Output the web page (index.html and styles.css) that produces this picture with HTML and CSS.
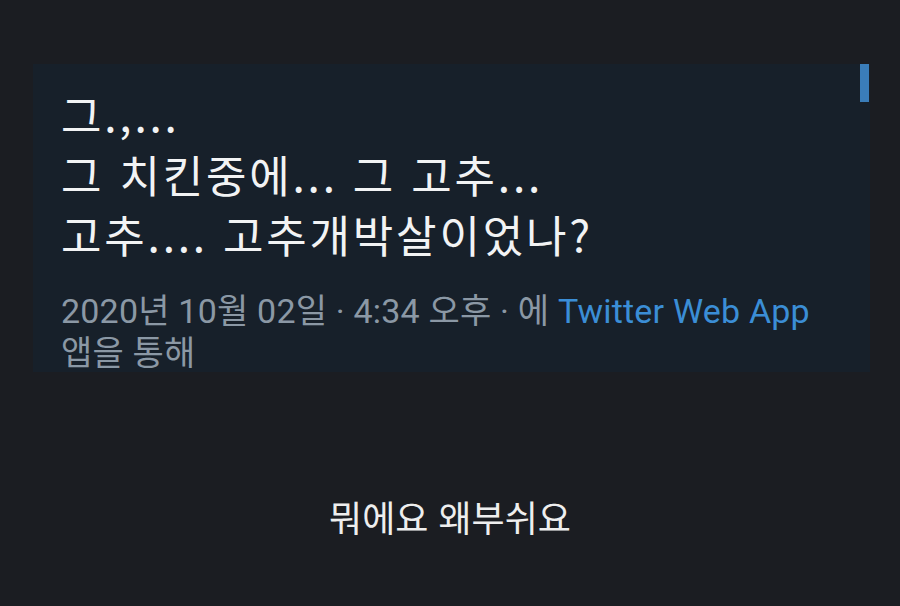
FILE: index.html
```html
<!DOCTYPE html>
<html lang="ko">
<head>
<meta charset="utf-8">
<title>트윗</title>
<link rel="stylesheet" href="styles.css">
</head>
<body>
<main class="screen">
  <article class="tweet">
    <div class="tweet-body">
      <p class="line">그.,...</p>
      <p class="line">그 치킨중에... 그 고추...</p>
      <p class="line">고추.... 고추개박살이었나?</p>
    </div>
    <div class="meta">
      <span>2020년 10월 02일 · 4:34 오후 · 에 <a class="source">Twitter Web App</a></span><br>
      <span>앱을 통해</span>
    </div>
    <span class="scrollbar"></span>
  </article>
  <p class="caption">뭐에요 왜부쉬요</p>
</main>
</body>
</html>
```

FILE: styles.css
```css
html, body {
  margin: 0;
  padding: 0;
  background: #1b1d22;
}

.screen {
  width: 900px;
  height: 606px;
  padding-top: 64px;
  box-sizing: border-box;
  font-family: "Noto Sans CJK KR", "Noto Sans", sans-serif;
}

.tweet {
  position: relative;
  margin-left: 33px;
  width: 837px;
  height: 308px;
  box-sizing: border-box;
  background: #17202a;
  padding: 20px 0 0 28px;
}

.tweet-body {
  color: #f2f3f4;
  font-size: 44px;
  line-height: 60px;
  letter-spacing: 2.8px;
}

.line {
  margin: 0;
  white-space: nowrap;
}

.meta {
  margin-top: 26px;
  color: #8b98a5;
  font-family: Roboto, "Noto Sans CJK KR", sans-serif;
  font-size: 34px;
  line-height: 42px;
  letter-spacing: 0.2px;
  white-space: nowrap;
}

.source {
  color: #3b8ed6;
}

.scrollbar {
  position: absolute;
  top: 0;
  right: 1px;
  width: 9px;
  height: 38px;
  background: #3a7db9;
}

.caption {
  margin: 124px 0 0;
  text-align: center;
  color: #eeeeee;
  font-size: 36px;
  line-height: 40px;
}
```
